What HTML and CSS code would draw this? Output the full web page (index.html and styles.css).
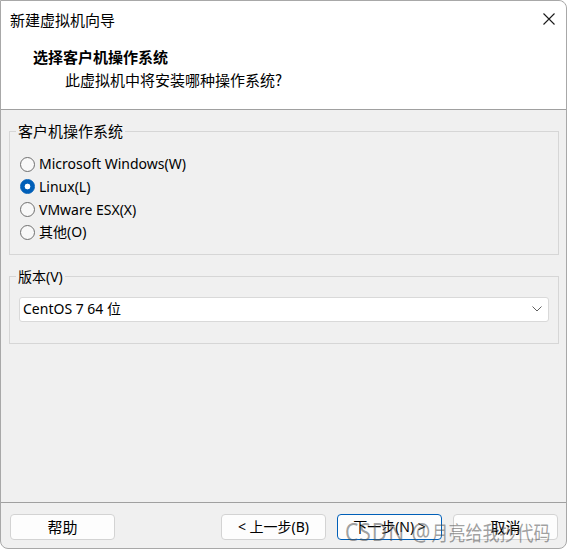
FILE: index.html
```html
<!DOCTYPE html>
<html lang="zh-CN">
<head>
<meta charset="utf-8">
<title>新建虚拟机向导</title>
<link rel="stylesheet" href="styles.css">
</head>
<body>
<div class="window">
  <div class="titlebar">
    <span class="title">新建虚拟机向导</span>
    <svg class="close" width="12" height="12" viewBox="0 0 12 12"><path d="M0.5 0.5 L11.5 11.5 M11.5 0.5 L0.5 11.5" stroke="#1a1a1a" stroke-width="1.1" fill="none"/></svg>
  </div>
  <div class="header">
    <div class="h-title">选择客户机操作系统</div>
    <div class="h-sub">此虚拟机中将安装哪种操作系统?</div>
  </div>
  <div class="body">
    <fieldset class="group group-os">
      <legend class="legend cjk">客户机操作系统</legend>
      <label class="row"><input class="radio" type="radio" name="os"><span>Microsoft Windows(W)</span></label>
      <label class="row"><input class="radio" type="radio" name="os" checked><span>Linux(L)</span></label>
      <label class="row"><input class="radio" type="radio" name="os"><span>VMware ESX(X)</span></label>
      <label class="row"><input class="radio" type="radio" name="os"><span>其他(O)</span></label>
    </fieldset>
    <fieldset class="group group-ver">
      <legend class="legend">版本(V)</legend>
      <div class="combo">
        <span>CentOS 7 64 位</span>
        <svg class="chev" width="10" height="6" viewBox="0 0 10 6"><path d="M0.5 0.5 L5 5 L9.5 0.5" stroke="#606060" stroke-width="1" fill="none"/></svg>
      </div>
    </fieldset>
  </div>
  <div class="footer">
    <button class="btn cjk">帮助</button>
    <span class="spacer"></span>
    <button class="btn">&lt; 上一步(B)</button>
    <button class="btn btn-focus">下一步(N) &gt;</button>
    <button class="btn cjk">取消</button>
  </div>
  <div class="watermark"><span class="wm-latin">CSDN @</span>月亮给我抄代码</div>
</div>
</body>
</html>
```

FILE: styles.css
```css
* { box-sizing: border-box; }
html, body { margin: 0; padding: 0; background: #ffffff; }
body {
  font-family: "Noto Sans", "Noto Sans CJK SC", sans-serif;
  font-size: 14px;
  color: #000;
}
.window {
  position: relative;
  width: 567px;
  height: 549px;
  border: 1px solid #a8a8a8;
  border-radius: 0 8px 8px 8px;
  background: #f0f0f0;
  display: flex;
  flex-direction: column;
}
.titlebar {
  height: 38px;
  background: #fff;
  border-radius: 0 8px 0 0;
  display: flex;
  align-items: center;
  padding: 0 11px 0 9px;
  justify-content: space-between;
}
.title {
  font-family: "Noto Sans CJK SC", sans-serif;
  font-size: 15px;
  line-height: 20px;
}
.close { display: block; margin-top: -2px; }
.header {
  height: 71px;
  background: #fff;
  border-bottom: 1px solid #a0a0a0;
  padding: 8px 0 0 32px;
}
.h-title {
  font-family: "Noto Sans CJK SC", sans-serif;
  font-weight: bold;
  font-size: 15px;
  line-height: 20px;
  margin-bottom: 3px;
}
.h-sub {
  font-family: "Noto Sans CJK SC", sans-serif;
  font-size: 15px;
  line-height: 20px;
  padding-left: 32px;
}
.body {
  flex: 1;
  padding: 11px 7px 0 8px;
}
.group {
  margin: 0;
  border: 1px solid #d6d6d6;
  padding: 12px 0 10px 6px;
  min-width: 0;
}
.legend {
  padding: 0 2px;
  line-height: 20px;
  font-size: 14px;
}
.legend.cjk {
  font-family: "Noto Sans CJK SC", sans-serif;
  font-size: 15px;
}
.row {
  display: flex;
  align-items: center;
  height: 22.67px;
  padding-left: 4px;
  line-height: 20px;
}
.radio {
  appearance: none;
  -webkit-appearance: none;
  margin: 0 4px 0 0;
  width: 15px;
  height: 15px;
  border: 1px solid #6f6f6f;
  border-radius: 50%;
  background: #f8f8f8;
  flex: none;
}
.radio:checked {
  border-color: #005fb8;
  background: radial-gradient(circle, #ffffff 0 2.6px, #005fb8 3.2px);
}
.group-ver {
  margin-top: 12px;
  padding: 10px 0 21px 6px;
}
.combo {
  margin: 0 9px 0 3px;
  height: 25px;
  background: #fff;
  border: 1px solid #d9d9d9;
  border-radius: 3px;
  display: flex;
  align-items: center;
  justify-content: space-between;
  padding: 0 6px 0 3px;
  line-height: 20px;
}
.chev { display: block; }
.footer {
  height: 46px;
  border-top: 1px solid #a0a0a0;
  display: flex;
  align-items: flex-start;
  gap: 11px;
  padding: 11px 8px 0 9px;
}
.spacer { flex: 1; }
.btn {
  width: 105px;
  height: 26px;
  margin: 0;
  padding: 0;
  background: #fdfdfd;
  border: 1px solid #d3d3d3;
  border-radius: 4px;
  font-family: "Noto Sans", "Noto Sans CJK SC", sans-serif;
  font-size: 14px;
  line-height: 20px;
  color: #000;
}
.btn.cjk {
  font-family: "Noto Sans CJK SC", sans-serif;
  font-size: 15px;
}
.btn-focus {
  border-color: #005fb8;
}
.watermark {
  position: absolute;
  left: 344px;
  top: 517px;
  font-family: "Noto Sans CJK SC", sans-serif;
  font-size: 17px;
  line-height: 28px;
  color: rgba(80, 80, 80, 0.55);
  white-space: nowrap;
  pointer-events: none;
  transform-origin: left center;
  transform: scaleY(1.2);
}
.wm-latin {
  font-family: "Noto Sans", sans-serif;
  font-size: 21px;
  letter-spacing: 1px;
}
```
